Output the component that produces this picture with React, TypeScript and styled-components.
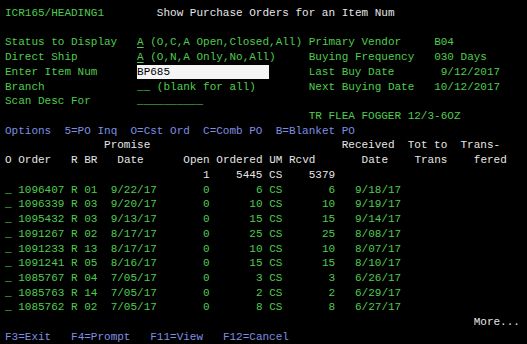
import React from "react";
import styled, { createGlobalStyle } from "styled-components";

const Global = createGlobalStyle`
  html, body { margin: 0; padding: 0; background: #000; }
  body { width: 527px; height: 344px; overflow: hidden; }
`;

type Tone = "g" | "w" | "b" | "k";

const colors: Record<Tone, string> = {
  g: "#4fcc4f",
  w: "#e6e6e6",
  b: "#7e8fe2",
  k: "#000",
};

const Screen = styled.div`
  background: #000;
  width: 527px;
  height: 344px;
  overflow: hidden;
  padding: 6px 0 0 5px;
  box-sizing: border-box;
  display: flex;
  flex-direction: column;
  font-family: "Liberation Mono", "DejaVu Sans Mono", monospace;
  font-size: 11px;
`;

const Row = styled.div`
  height: 14.72px;
  line-height: 14.72px;
  white-space: pre;
  color: ${colors.g};
`;

const Txt = styled.span<{ $tone: Tone; $ul?: boolean }>`
  color: ${(p) => colors[p.$tone]};
  text-decoration: ${(p) => (p.$ul ? "underline" : "none")};
  text-underline-offset: 2px;
`;

const InputBox = styled.span`
  display: inline-block;
  width: 20ch;
  height: 14px;
  line-height: 14px;
  vertical-align: top;
  background: #f5f5f5;
  color: #000;
`;

type Seg = { col: number; text: string; tone?: Tone; ul?: boolean; input?: boolean; right?: boolean };

function Line({ segs }: { segs?: Seg[] }) {
  const out: React.ReactNode[] = [];
  let cur = 0;
  (segs || []).forEach((s, i) => {
    const start = s.right ? s.col - s.text.length + 1 : s.col;
    if (start > cur) out.push(" ".repeat(start - cur));
    if (s.input) {
      out.push(<InputBox key={i}>{s.text}</InputBox>);
      cur = start + 20;
    } else {
      out.push(
        <Txt key={i} $tone={s.tone || "g"} $ul={s.ul}>
          {s.text}
        </Txt>
      );
      cur = start + s.text.length;
    }
  });
  return <Row>{out.length ? out : " "}</Row>;
}

const orders = [
  ["1096407", "01", "9/22/17", "6", "6", "9/18/17"],
  ["1096339", "03", "9/20/17", "10", "10", "9/19/17"],
  ["1095432", "03", "9/13/17", "15", "15", "9/14/17"],
  ["1091267", "02", "8/17/17", "25", "25", "8/08/17"],
  ["1091233", "13", "8/17/17", "10", "10", "8/07/17"],
  ["1091241", "05", "8/16/17", "15", "15", "8/10/17"],
  ["1085767", "04", "7/05/17", "3", "3", "6/26/17"],
  ["1085763", "14", "7/05/17", "2", "2", "6/29/17"],
  ["1085762", "02", "7/05/17", "8", "8", "6/27/17"],
];

export default function App() {
  return (
    <>
      <Global />
      <Screen>
        <Line
          segs={[
            { col: 0, text: "ICR165/HEADING1" },
            { col: 23, text: "Show Purchase Orders for an Item Num", tone: "w" },
          ]}
        />
        <Line />
        <Line
          segs={[
            { col: 0, text: "Status to Display" },
            { col: 20, text: "A", ul: true },
            { col: 22, text: "(O,C,A Open,Closed,All)" },
            { col: 46, text: "Primary Vendor" },
            { col: 65, text: "B04" },
          ]}
        />
        <Line
          segs={[
            { col: 0, text: "Direct Ship" },
            { col: 20, text: "A", ul: true },
            { col: 22, text: "(O,N,A Only,No,All)" },
            { col: 46, text: "Buying Frequency" },
            { col: 65, text: "030 Days" },
          ]}
        />
        <Line
          segs={[
            { col: 0, text: "Enter Item Num" },
            { col: 20, text: "BP685", input: true },
            { col: 46, text: "Last Buy Date" },
            { col: 66, text: "9/12/2017" },
          ]}
        />
        <Line
          segs={[
            { col: 0, text: "Branch" },
            { col: 20, text: "__" },
            { col: 23, text: "(blank for all)" },
            { col: 46, text: "Next Buying Date" },
            { col: 65, text: "10/12/2017" },
          ]}
        />
        <Line
          segs={[
            { col: 0, text: "Scan Desc For" },
            { col: 20, text: "__________" },
          ]}
        />
        <Line segs={[{ col: 46, text: "TR FLEA FOGGER 12/3-6OZ" }]} />
        <Line
          segs={[
            { col: 0, text: "Options", tone: "b" },
            { col: 9, text: "5=PO Inq", tone: "b" },
            { col: 19, text: "O=Cst Ord", tone: "b" },
            { col: 30, text: "C=Comb PO", tone: "b" },
            { col: 41, text: "B=Blanket PO", tone: "b" },
          ]}
        />
        <Line
          segs={[
            { col: 15, text: "Promise", tone: "w" },
            { col: 51, text: "Received", tone: "w" },
            { col: 61, text: "Tot to", tone: "w" },
            { col: 69, text: "Trans-", tone: "w" },
          ]}
        />
        <Line
          segs={[
            { col: 0, text: "O", tone: "w" },
            { col: 2, text: "Order", tone: "w" },
            { col: 10, text: "R", tone: "w" },
            { col: 12, text: "BR", tone: "w" },
            { col: 17, text: "Date", tone: "w" },
            { col: 27, text: "Open", tone: "w" },
            { col: 32, text: "Ordered", tone: "w" },
            { col: 40, text: "UM", tone: "w" },
            { col: 43, text: "Rcvd", tone: "w" },
            { col: 54, text: "Date", tone: "w" },
            { col: 62, text: "Trans", tone: "w" },
            { col: 71, text: "fered", tone: "w" },
          ]}
        />
        <Line
          segs={[
            { col: 30, text: "1", tone: "w" },
            { col: 38, text: "5445", tone: "w", right: true },
            { col: 40, text: "CS", tone: "w" },
            { col: 49, text: "5379", tone: "w", right: true },
          ]}
        />
        {orders.map((o) => (
          <Line
            key={o[0]}
            segs={[
              { col: 0, text: "_" },
              { col: 2, text: o[0] },
              { col: 10, text: "R" },
              { col: 12, text: o[1] },
              { col: 16, text: o[2] },
              { col: 30, text: "0" },
              { col: 38, text: o[3], right: true },
              { col: 40, text: "CS" },
              { col: 49, text: o[4], right: true },
              { col: 53, text: o[5] },
            ]}
          />
        ))}
        <Line segs={[{ col: 71, text: "More...", tone: "w" }]} />
        <Line
          segs={[
            { col: 0, text: "F3=Exit", tone: "b" },
            { col: 10, text: "F4=Prompt", tone: "b" },
            { col: 22, text: "F11=View", tone: "b" },
            { col: 33, text: "F12=Cancel", tone: "b" },
          ]}
        />
      </Screen>
    </>
  );
}
